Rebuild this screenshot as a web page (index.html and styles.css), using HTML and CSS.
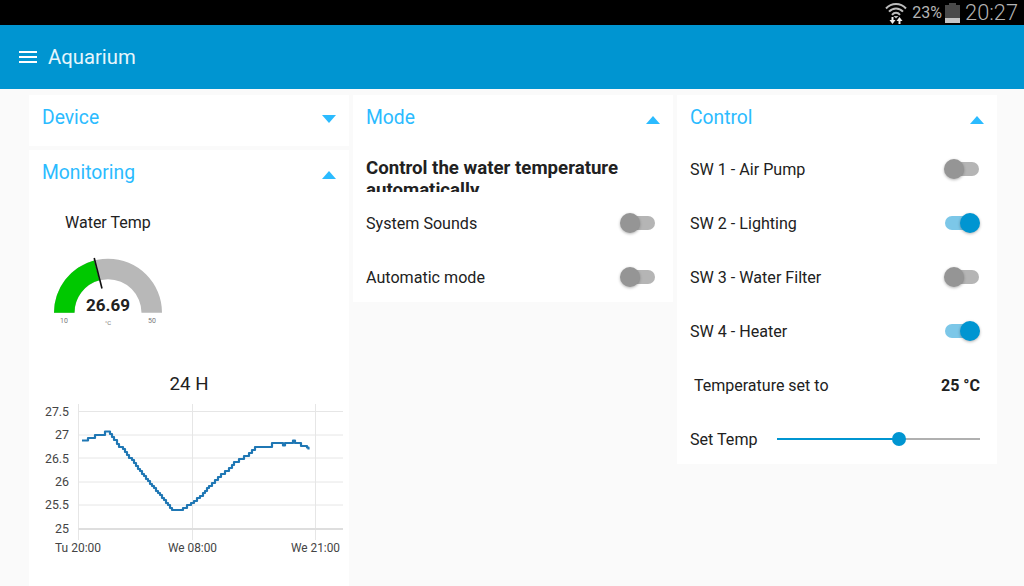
FILE: index.html
```html
<!DOCTYPE html>
<html lang="en">
<head>
<meta charset="utf-8">
<title>Aquarium</title>
<link rel="stylesheet" href="styles.css">
</head>
<body>
<div class="status">
  <svg class="wifi" viewBox="0 0 22 23" width="22" height="23">
    <path d="M1 6.500C6.500 0.500 15.500 0.500 21 6.500" class="arc"/>
    <path d="M4 9.700C8 5.300 14 5.300 18 9.700" class="arc"/>
    <path d="M7 12.800C9.300 10.200 12.700 10.200 15 12.800" class="arc"/>
    <path d="M11 16.500L8.500 14H13.500Z" class="arc-fill"/>
    <path d="M6.500 15H8.500V18H10.500L7.500 22L4.500 18H6.500ZM13.500 22H15.500V19H17.500L14.500 15L11.500 19H13.500Z" class="arrows"/>
  </svg>
  <span class="pct">23%</span>
  <span class="battery"><span class="battery-cap"></span><span class="battery-body"><span class="battery-level"></span></span></span>
  <span class="clock">20:27</span>
</div>
<header class="appbar">
  <span class="burger"><span></span><span></span><span></span></span>
  <span class="appname">Aquarium</span>
</header>
<main class="board">
  <section class="column">
    <div class="card card-device">
      <div class="card-head"><span>Device</span><i class="tri tri-down"></i></div>
    </div>
    <div class="card card-fill">
      <div class="card-head"><span>Monitoring</span><i class="tri tri-up"></i></div>
      <div class="gauge-title">Water Temp</div>
      <svg class="gauge" viewBox="29 240 320 100" width="320" height="100">
        <path d="M54 312.700A54 54 0 0 1 162 312.700H141.500A33.500 33.500 0 0 0 74.500 312.700Z" class="g-bg"/>
        <path d="M54 312.700A54 54 0 0 1 94.100 260.500L99.400 280.300A33.500 33.500 0 0 0 74.500 312.700Z" class="g-val"/>
        <line x1="94.200" y1="258" x2="102" y2="288.500" class="g-needle"/>
        <text x="108" y="311" class="g-num">26.69</text>
        <text x="64" y="323" class="g-small">10</text>
        <text x="108" y="325" class="g-unit">°C</text>
        <text x="152" y="323" class="g-small">50</text>
      </svg>
      <div class="chart-title">24 H</div>
      <svg class="chart" viewBox="29 400 320 160" width="320" height="160">
        <g class="grid">
          <path d="M78.500 411.500H343M78.500 435H343M78.500 458H343M78.500 482H343M78.500 505H343"/>
          <path d="M78.500 404V540M192.500 404V540M315.500 404V540"/>
        </g>
        <path d="M78.500 529H343" class="axis"/>
        <path class="line" d="M82 440.500H88V438H95V435H105V431.500H110V434H112V437H114V440H117V444H119V447H123V449H125V452H127V455H129V458H132V460H134V463H136V466H138V469H140V471H142V474H144V476H146V479H148V481H150V484H152V486H154V488H156V491H158V493H160V495H162V498H164V500H166V503H168V505H170V508H172V510H183V508H187V505H191V503H194V501H197V498H200V496H203V493H205V491H207V488H209V486H212V483H215V480H218V477H221V474H225V471H229V468H232V465H234V462H239V459H244V456H249V453H252V450H255V447H272V443H283V445.500H285V443H293V440.500H295V443H301V446H307V447.500H308.500V449.500"/>
        <g class="y-labels">
          <text x="69" y="416" textLength="24" lengthAdjust="spacingAndGlyphs">27.5</text>
          <text x="69" y="439" textLength="14" lengthAdjust="spacingAndGlyphs">27</text>
          <text x="69" y="463" textLength="24" lengthAdjust="spacingAndGlyphs">26.5</text>
          <text x="69" y="486" textLength="14" lengthAdjust="spacingAndGlyphs">26</text>
          <text x="69" y="509" textLength="24" lengthAdjust="spacingAndGlyphs">25.5</text>
          <text x="69" y="533" textLength="14" lengthAdjust="spacingAndGlyphs">25</text>
        </g>
        <g class="x-labels">
          <text x="78" y="552" textLength="46" lengthAdjust="spacingAndGlyphs">Tu 20:00</text>
          <text x="192.500" y="552" textLength="49" lengthAdjust="spacingAndGlyphs">We 08:00</text>
          <text x="315.500" y="552" textLength="49" lengthAdjust="spacingAndGlyphs">We 21:00</text>
        </g>
      </svg>
    </div>
  </section>
  <section class="column">
    <div class="card">
      <div class="card-head"><span>Mode</span><i class="tri tri-up"></i></div>
      <div class="desc"><div class="desc-text">Control the water temperature automatically</div></div>
      <div class="row"><span>System Sounds</span><span class="toggle"></span></div>
      <div class="row row-last"><span>Automatic mode</span><span class="toggle"></span></div>
    </div>
  </section>
  <section class="column">
    <div class="card">
      <div class="card-head"><span>Control</span><i class="tri tri-up"></i></div>
      <div class="row row-first"><span>SW 1 - Air Pump</span><span class="toggle"></span></div>
      <div class="row"><span>SW 2 - Lighting</span><span class="toggle on"></span></div>
      <div class="row"><span>SW 3 - Water Filter</span><span class="toggle"></span></div>
      <div class="row"><span>SW 4 - Heater</span><span class="toggle on"></span></div>
      <div class="row row-temp"><span>Temperature set to</span><b>25 °C</b></div>
      <div class="row row-last"><span>Set Temp</span><span class="slider"><span class="slider-fill"></span><span class="slider-thumb"></span></span></div>
    </div>
  </section>
</main>
</body>
</html>
```
FILE: styles.css
```css
* { box-sizing: border-box; }
html, body { margin: 0; height: 586px; overflow: hidden; }
body { background: #fafafa; font-family: Roboto, "Liberation Sans", sans-serif; color: #212121; display: flex; flex-direction: column; }

.status { height: 25px; background: #000; display: flex; align-items: center; justify-content: flex-end; padding-right: 6px; color: #b4b4b4; flex: none; }
.wifi { margin-right: 5px; margin-top: 1px; }
.arc { fill: none; stroke: #bdbdbd; stroke-width: 2; }
.arc-fill { fill: #bdbdbd; }
.arrows { fill: #eee; }
.pct { font-size: 16px; margin-right: 3px; }
.battery { display: flex; flex-direction: column; align-items: center; width: 15px; height: 20px; margin-right: 5px; }
.battery-cap { width: 7px; height: 2px; background: #4a4a4a; }
.battery-body { flex: 1; width: 15px; background: #4a4a4a; display: flex; align-items: flex-end; }
.battery-level { width: 100%; height: 5px; background: #c4c4c4; }
.clock { font-size: 21.800px; font-weight: 300; }

.appbar { height: 64px; background: #0095d1; display: flex; align-items: center; padding-left: 19px; flex: none; }
.burger { display: flex; flex-direction: column; gap: 3px; width: 18px; margin-right: 11px; }
.burger span { height: 2px; background: #fff; }
.appname { color: #e6f6fc; font-size: 20.300px; }

.board { flex: 1; min-height: 0; display: grid; grid-template-columns: repeat(3, 320px); gap: 4px; padding: 6px 0 0 29px; }
.column { display: flex; flex-direction: column; gap: 4px; min-height: 0; }
.card { background: #fff; }
.card-device { height: 51px; }
.card-fill { flex: 1; min-height: 0; overflow: hidden; }

.card-head { height: 44px; padding: 0 13px; display: flex; align-items: center; justify-content: space-between; font-size: 19.300px; }
.card-head span { color: #2bbbff; }
.tri { width: 0; height: 0; border-left: 7px solid transparent; border-right: 7px solid transparent; }
.tri-down { border-top: 8px solid #2bbbff; margin-top: 3px; }
.tri-up { border-bottom: 8px solid #2bbbff; margin-top: 6px; }

.row { height: 54px; padding: 0 17px 0 13px; display: flex; align-items: center; justify-content: space-between; font-size: 16.100px; }
.row-first { margin-top: 3px; }
.row-last { height: 52px; padding-top: 0; align-items: flex-start; }
.row-last > span:first-child { margin-top: 18px; line-height: 19px; }
.row-temp { padding-left: 17px; font-size: 16px; }
.row-temp b { font-weight: 700; }

.desc { height: 54px; margin-top: 3px; padding: 15px 13px 0; }
.desc-text { height: 35px; overflow: hidden; font-size: 18.650px; line-height: 22px; font-weight: 700; }

.toggle { position: relative; width: 34px; height: 14px; border-radius: 7px; background: #b5b5b5; flex: none; margin-right: 1px; }
.toggle::after { content: ""; position: absolute; left: -1px; top: -3px; width: 20px; height: 20px; border-radius: 50%; background: #959595; box-shadow: 0 1px 3px rgba(0,0,0,.3); }
.toggle.on { background: #7cc7e8; }
.toggle.on::after { left: 15px; background: #0095d1; }
.row-last .toggle { margin-top: 20px; }

.slider { position: relative; width: 203px; height: 2px; background: #b0b0b0; margin-top: 26px; }
.slider-fill { position: absolute; left: 0; top: 0; height: 2px; width: 122px; background: #0095d1; }
.slider-thumb { position: absolute; left: 115px; top: -6px; width: 14px; height: 14px; border-radius: 50%; background: #0095d1; }

.gauge-title { margin: 19px 0 0 36px; line-height: 20px; font-size: 16px; }
.gauge { display: block; margin-top: 7px; }
.g-bg { fill: #b8b8b8; }
.g-val { fill: #00c800; }
.g-needle { stroke: #111; stroke-width: 1.6; }
.g-num { font: 700 17px Roboto, sans-serif; text-anchor: middle; fill: #212121; }
.g-small { font: 7px Roboto, sans-serif; text-anchor: middle; fill: #777; }
.g-unit { font: 6px Roboto, sans-serif; text-anchor: middle; fill: #777; }

.chart-title { margin-top: 32px; height: 24px; line-height: 24px; text-align: center; font-size: 18.700px; }
.chart { display: block; margin-top: 4px; }
.grid path { fill: none; stroke: #e6e6e6; stroke-width: 1; }
.axis { fill: none; stroke: #dedede; stroke-width: 2; }
.line { fill: none; stroke: #1f77b4; stroke-width: 2.200; stroke-linejoin: round; }
.y-labels text { font: 13.500px Roboto, sans-serif; text-anchor: end; fill: #444; }
.x-labels text { font: 13.500px Roboto, sans-serif; text-anchor: middle; fill: #444; }
```
